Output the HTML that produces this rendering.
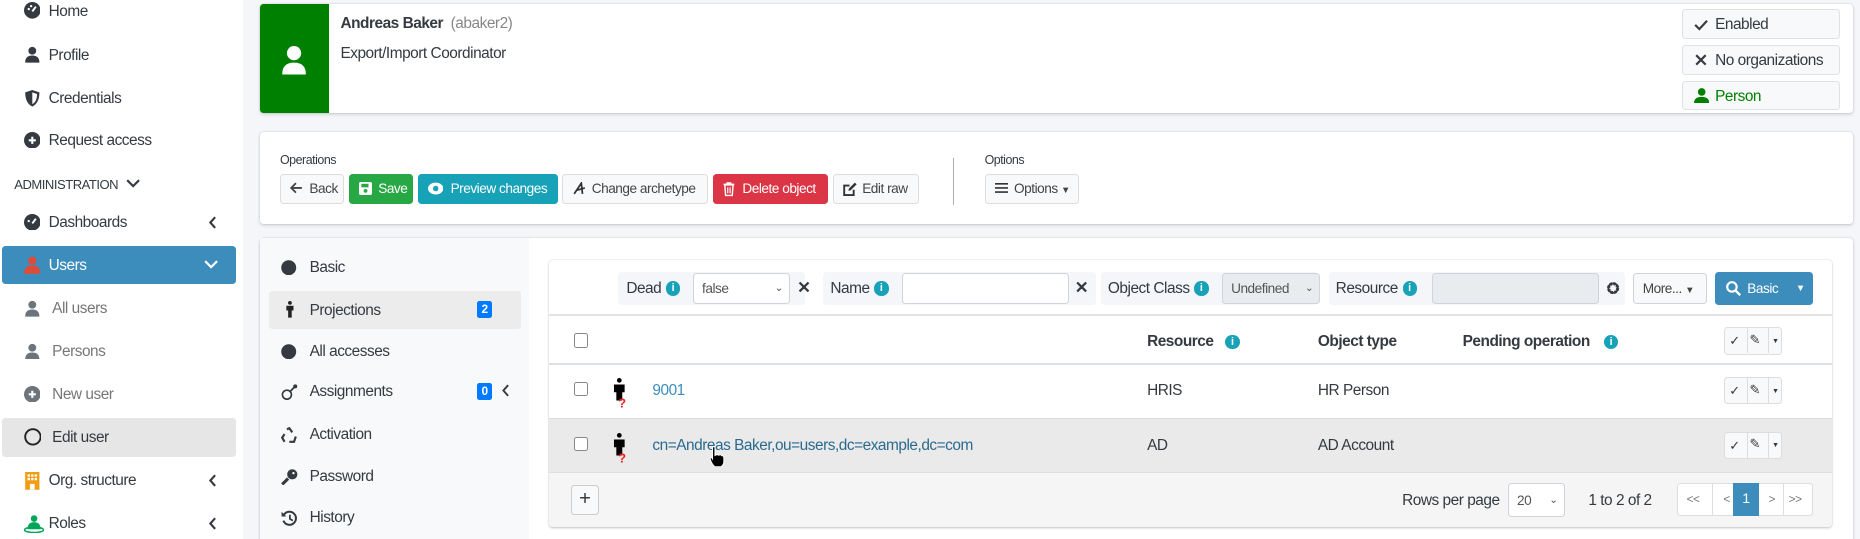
<!DOCTYPE html>
<html><head><meta charset="utf-8">
<style>
*{box-sizing:border-box;margin:0;padding:0}
html,body{width:1860px;height:539px;overflow:hidden;background:#f4f6f9}
#w{zoom:1.18622;width:1568px;height:455px;position:relative;font-family:"Liberation Sans",sans-serif;font-size:12.5px;color:#343a40;letter-spacing:-0.4px}
.a{position:absolute}
.side{left:0;top:0;width:205px;height:455px;background:#fff}
.si{position:absolute;left:2px;width:197px;height:32px;line-height:33px;padding-left:39px;font-size:13px;color:#343a40}
.si svg{position:absolute;left:18px;top:9px}
.card{background:#fff;border-radius:3px;box-shadow:0 0 1px rgba(0,0,0,.2),0 1px 3px rgba(0,0,0,.15)}
.btn{position:absolute;top:147px;height:25px;line-height:24px;border:1px solid #ddd;border-radius:3px;background:#f8f9fa;font-size:11.5px;padding-left:24px;color:#444}
.btn svg{position:absolute;left:8px;top:6px}
.badge{position:absolute;left:1418px;width:133px;height:25px;line-height:25px;border:1px solid #dee2e6;border-radius:3px;background:#f8f9fa;padding-left:27px;font-size:13px}
.mi{position:absolute;left:227px;width:212px;height:32px;line-height:33px;padding-left:34px;font-size:13px}
.mi svg{position:absolute;left:10px;top:10px}
.chip{position:absolute;top:229px;height:28px;background:#f4f6f9;border-radius:3px;line-height:29px;font-size:13px}
.info{display:inline-block;width:12px;height:12px;border-radius:50%;background:#17a2b8;color:#fff;font-size:9px;line-height:12px;text-align:center;font-weight:bold;vertical-align:1px;margin-left:4px;letter-spacing:0}
.inp{position:absolute;top:230px;height:26px;border:1px solid #ced4da;border-radius:3px;background:#fff;font-size:11.5px;line-height:25px;padding-left:7px;color:#555}
.cb{position:absolute;left:484px;width:12px;height:12px;border:1px solid #888;border-radius:2px;background:#fff}
.act{position:absolute;left:1453px;width:49px;height:23px;border:1px solid #ddd;border-radius:3px;background:#f8f9fa}
.act i{position:absolute;top:0;height:21px;border-right:1px solid #ddd}
.th{position:absolute;top:281px;font-weight:bold;font-size:13px}
.td{position:absolute;font-size:13px}
</style></head><body><div id="w">
<div class="a side">
 <div class="si" style="top:-7px"><svg width="14" height="14" viewBox="0 0 14 14"><circle cx="7" cy="7" r="7" fill="#343a40"/><path d="M7 8 L10 4" stroke="#fff" stroke-width="1.6"/><circle cx="4" cy="6" r="1" fill="#fff"/><circle cx="6" cy="3.5" r="1" fill="#fff"/></svg>Home</div>
 <div class="si" style="top:30px"><svg width="14" height="14" viewBox="0 0 14 14"><circle cx="7" cy="4" r="3.3" fill="#343a40"/><path d="M1 14 Q1 8 7 8 Q13 8 13 14Z" fill="#343a40"/></svg>Profile</div>
 <div class="si" style="top:67px"><svg width="14" height="14" viewBox="0 0 14 14"><path d="M7 0 L13 2 Q13 11 7 14 Q1 11 1 2Z" fill="#343a40"/><path d="M7 2 L11 3.4 Q11 10 7 12Z" fill="#fff"/></svg>Credentials</div>
 <div class="si" style="top:102px"><svg width="14" height="14" viewBox="0 0 14 14"><circle cx="7" cy="7" r="7" fill="#343a40"/><path d="M7 4V10M4 7H10" stroke="#fff" stroke-width="1.8"/></svg>Request access</div>
 <div class="a" style="left:12px;top:149px;font-size:11px">ADMINISTRATION <svg width="12" height="8" viewBox="0 0 12 8" style="margin-left:4px"><path d="M1 1L6 6L11 1" stroke="#343a40" stroke-width="1.8" fill="none"/></svg></div>
 <div class="si" style="top:171px"><svg width="14" height="14" viewBox="0 0 14 14"><circle cx="7" cy="7" r="7" fill="#343a40"/><path d="M7 8 L10 4" stroke="#fff" stroke-width="1.6"/><circle cx="4" cy="6" r="1" fill="#fff"/></svg>Dashboards<svg style="left:173px;top:11px" width="8" height="11" viewBox="0 0 8 11"><path d="M6 1L2 5.5L6 10" stroke="#343a40" stroke-width="1.8" fill="none"/></svg></div>
 <div class="si" style="top:207px;background:#3c8dbc;color:#fff;border-radius:3px"><svg width="14" height="15" viewBox="0 0 14 15"><circle cx="7" cy="4" r="3.5" fill="#dd4b39"/><path d="M0 15 Q0 8 7 8 Q14 8 14 15Z" fill="#dd4b39"/></svg>Users<svg style="left:170px;top:12px" width="12" height="8" viewBox="0 0 12 8"><path d="M1 1L6 6L11 1" stroke="#fff" stroke-width="1.8" fill="none"/></svg></div>
 <div class="si" style="top:244px;color:#777;padding-left:42px"><svg width="14" height="14" viewBox="0 0 14 14"><circle cx="7" cy="4" r="3.3" fill="#6c757d"/><path d="M1 14 Q1 8 7 8 Q13 8 13 14Z" fill="#6c757d"/></svg>All users</div>
 <div class="si" style="top:280px;color:#777;padding-left:42px"><svg width="14" height="14" viewBox="0 0 14 14"><circle cx="7" cy="4" r="3.3" fill="#6c757d"/><path d="M1 14 Q1 8 7 8 Q13 8 13 14Z" fill="#6c757d"/></svg>Persons</div>
 <div class="si" style="top:316px;color:#777;padding-left:42px"><svg width="14" height="14" viewBox="0 0 14 14"><circle cx="7" cy="7" r="7" fill="#6c757d"/><path d="M7 4V10M4 7H10" stroke="#fff" stroke-width="1.8"/></svg>New user</div>
 <div class="si" style="top:352px;height:33px;line-height:34px;background:#e6e6e6;border-radius:3px;padding-left:42px"><svg width="15" height="15" viewBox="0 0 15 15"><circle cx="7.5" cy="7.5" r="6.5" stroke="#222" stroke-width="1.6" fill="none"/></svg>Edit user</div>
 <div class="si" style="top:389px"><svg width="14" height="15" viewBox="0 0 14 15"><rect x="1" y="0" width="12" height="15" fill="#f39c12"/><g fill="#fff"><rect x="3" y="2" width="2" height="2"/><rect x="6" y="2" width="2" height="2"/><rect x="9" y="2" width="2" height="2"/><rect x="3" y="5" width="2" height="2"/><rect x="6" y="5" width="2" height="2"/><rect x="9" y="5" width="2" height="2"/><rect x="5" y="10" width="4" height="5"/></g></svg>Org. structure<svg style="left:173px;top:11px" width="8" height="11" viewBox="0 0 8 11"><path d="M6 1L2 5.5L6 10" stroke="#343a40" stroke-width="1.8" fill="none"/></svg></div>
 <div class="si" style="top:425px"><svg width="17" height="15" viewBox="0 0 17 15"><circle cx="8.5" cy="3" r="2.8" fill="#00a65a"/><path d="M3 12 Q3 6 8.5 6 Q14 6 14 12Z" fill="#00a65a"/><ellipse cx="8.5" cy="12.5" rx="8" ry="2.3" fill="none" stroke="#00a65a" stroke-width="1.3"/></svg>Roles<svg style="left:173px;top:11px" width="8" height="11" viewBox="0 0 8 11"><path d="M6 1L2 5.5L6 10" stroke="#343a40" stroke-width="1.8" fill="none"/></svg></div>
</div>

<div class="a card" style="left:219px;top:3px;width:1343px;height:92px"></div>
<div class="a" style="left:219px;top:3px;width:58px;height:92px;background:#008000;border-radius:3px 0 0 3px"></div>
<svg class="a" style="left:237px;top:39px" width="22" height="24" viewBox="0 0 22 24"><circle cx="11" cy="6" r="6" fill="#fff"/><path d="M1 24 Q1 14 11 14 Q21 14 21 24Z" fill="#fff"/></svg>
<div class="a" style="left:287px;top:13px;font-size:13px"><b>Andreas Baker</b>&nbsp;&nbsp;<span style="color:#888">(abaker2)</span></div>
<div class="a" style="left:287px;top:38px;font-size:13px">Export/Import Coordinator</div>
<div class="badge" style="top:8px"><svg class="a" style="left:9px;top:7px" width="12" height="10" viewBox="0 0 12 10"><path d="M1 5L4.5 8.5L11 1.5" stroke="#343a40" stroke-width="1.8" fill="none"/></svg>Enabled</div>
<div class="badge" style="top:38px"><svg class="a" style="left:10px;top:7px" width="10" height="10" viewBox="0 0 10 10"><path d="M1 1L9 9M9 1L1 9" stroke="#343a40" stroke-width="1.8"/></svg>No organizations</div>
<div class="badge" style="top:68px;color:#008000"><svg class="a" style="left:9px;top:5px" width="13" height="13" viewBox="0 0 13 13"><circle cx="6.5" cy="3.3" r="3.2" fill="#008000"/><path d="M0 13 Q0 7.5 6.5 7.5 Q13 7.5 13 13Z" fill="#008000"/></svg>Person</div>

<div class="a card" style="left:219px;top:111px;width:1343px;height:78px"></div>
<div class="a" style="left:236px;top:129px;font-size:10.5px">Operations</div>
<div class="btn" style="left:236px;width:54px"><svg width="11" height="10" viewBox="0 0 11 10"><path d="M5 1L1 5L5 9M1 5H10" stroke="#444" stroke-width="1.5" fill="none"/></svg>Back</div>
<div class="btn" style="left:294px;width:54px;background:#28a745;border-color:#28a745;color:#fff"><svg width="11" height="11" viewBox="0 0 11 11"><rect x="0" y="0" width="11" height="11" rx="1.5" fill="#fff"/><rect x="2" y="1.5" width="6" height="3" fill="#28a745"/><circle cx="5.5" cy="7.5" r="1.6" fill="#28a745"/></svg>Save</div>
<div class="btn" style="left:352px;width:118px;background:#17a2b8;border-color:#17a2b8;color:#fff;padding-left:27px"><svg width="13" height="11" viewBox="0 0 13 11"><ellipse cx="6.5" cy="5.5" rx="6.5" ry="5" fill="#fff"/><circle cx="6.5" cy="5.5" r="2.3" fill="#17a2b8"/></svg>Preview changes</div>
<div class="btn" style="left:474px;width:123px"><svg width="11" height="11" viewBox="0 0 11 11"><path d="M1 10L7 1L8 10M3 7L10 5" stroke="#333" stroke-width="1.5" fill="none"/></svg>Change archetype</div>
<div class="btn" style="left:601px;width:97px;background:#dc3545;border-color:#dc3545;color:#fff"><svg width="10" height="12" viewBox="0 0 10 12"><path d="M0.5 2H9.5M3.5 2V0.8H6.5V2M1.5 2.5L2.2 11.3H7.8L8.5 2.5Z" stroke="#fff" stroke-width="1.2" fill="none"/><path d="M4 4.5V9.5M6 4.5V9.5" stroke="#fff" stroke-width="1"/></svg>Delete object</div>
<div class="btn" style="left:702px;width:73px"><svg width="12" height="12" viewBox="0 0 12 12"><path d="M9 6.5V11H1V3H5.5" stroke="#333" stroke-width="1.6" fill="none"/><path d="M4.5 7.5L5 5.5L10 0.5L11.5 2L6.5 7Z" fill="#333"/></svg>Edit raw</div>
<div class="a" style="left:803px;top:133px;width:1px;height:40px;background:#aab"></div>
<div class="a" style="left:830px;top:129px;font-size:10.5px">Options</div>
<div class="btn" style="left:830px;width:80px"><svg width="11" height="10" viewBox="0 0 11 10"><path d="M0 1.5H11M0 5H11M0 8.5H11" stroke="#333" stroke-width="1.4"/></svg>Options <span style="font-size:8px">&#9660;</span></div>

<div class="a card" style="left:219px;top:201px;width:1343px;height:260px"></div>
<div class="a" style="left:219px;top:201px;width:227px;height:260px;background:#f8f9fa"></div>
<div class="mi" style="top:209px"><svg width="13" height="13"><circle cx="6.5" cy="6.5" r="6.3" fill="#343a40"/></svg>Basic</div>
<div class="mi" style="top:245px;background:#ececec;border-radius:3px"><svg width="10" height="14" viewBox="0 0 10 14" style="left:12px;top:9px"><circle cx="5" cy="1.6" r="1.6" fill="#222"/><path d="M2 4H8V8H6.5V14H3.5V8H2Z" fill="#222"/></svg>Projections<span class="a" style="left:175px;top:9px;width:13px;height:14px;background:#007bff;color:#fff;border-radius:2px;font-size:10px;line-height:14px;text-align:center;font-weight:bold">2</span></div>
<div class="mi" style="top:280px"><svg width="13" height="13"><circle cx="6.5" cy="6.5" r="6.3" fill="#343a40"/></svg>All accesses</div>
<div class="mi" style="top:314px"><svg width="14" height="14" viewBox="0 0 14 14"><circle cx="5" cy="9" r="3.8" stroke="#343a40" stroke-width="1.4" fill="none"/><path d="M7.5 6.5L11 3" stroke="#343a40" stroke-width="1.5"/><circle cx="12" cy="2" r="1.7" fill="#343a40"/></svg>Assignments<span class="a" style="left:175px;top:9px;width:13px;height:14px;background:#007bff;color:#fff;border-radius:2px;font-size:10px;line-height:14px;text-align:center;font-weight:bold">0</span><svg width="7" height="11" viewBox="0 0 7 11" style="left:195px;top:10px"><path d="M6 1L2 5.5L6 10" stroke="#343a40" stroke-width="1.6" fill="none"/></svg></div>
<div class="mi" style="top:350px"><svg width="14" height="14" viewBox="0 0 14 14"><path d="M5 2L7 1L9.5 4.5M12.5 8L11 12.5H7M3 12.5L1 9L3 6" stroke="#343a40" stroke-width="1.8" fill="none"/></svg>Activation</div>
<div class="mi" style="top:385px"><svg width="14" height="14" viewBox="0 0 14 14"><circle cx="9.5" cy="4.5" r="4.3" fill="#343a40"/><path d="M6 8L1 13" stroke="#343a40" stroke-width="2.6"/><circle cx="10.5" cy="3.5" r="1" fill="#fff"/></svg>Password</div>
<div class="mi" style="top:420px"><svg width="14" height="14" viewBox="0 0 14 14"><path d="M2.5 4A5.5 5.5 0 1 1 2 9" stroke="#343a40" stroke-width="1.7" fill="none"/><path d="M0.5 1.5V5.5H4.5Z" fill="#343a40"/><path d="M7.5 4V7.5L10 9" stroke="#343a40" stroke-width="1.5" fill="none"/></svg>History</div>

<div class="a" style="left:463px;top:219px;width:1081px;height:225px;background:#fff;border-radius:3px;box-shadow:0 0 1px rgba(0,0,0,.25),0 1px 2px rgba(0,0,0,.15)"></div>
<div class="chip" style="left:521px;width:158px;padding-left:7px">Dead<span class="info">i</span></div>
<div class="inp" style="left:584px;width:82px">false<span class="a" style="right:5px;top:0;font-size:9px">&#8964;</span></div>
<div class="a" style="left:672px;top:234px;font-size:14px;font-weight:bold">&#x2715;</div>
<div class="chip" style="left:694px;width:230px;padding-left:6px">Name<span class="info">i</span></div>
<div class="inp" style="left:760px;width:141px"></div>
<div class="a" style="left:906px;top:234px;font-size:14px;font-weight:bold">&#x2715;</div>
<div class="chip" style="left:928px;width:183px;padding-left:6px">Object Class<span class="info">i</span></div>
<div class="inp" style="left:1030px;width:83px;background:#e9ecef">Undefined<span class="a" style="right:5px;top:0;font-size:9px">&#8964;</span></div>
<div class="chip" style="left:1120px;width:250px;padding-left:6px">Resource<span class="info">i</span></div>
<div class="inp" style="left:1207px;width:141px;background:#e9ecef"></div>
<svg class="a" style="left:1354px;top:237px" width="12" height="12" viewBox="0 0 12 12"><circle cx="6" cy="6" r="3.8" stroke="#343a40" stroke-width="2.6" fill="none" stroke-dasharray="2 1"/><circle cx="6" cy="6" r="4" stroke="#343a40" stroke-width="1.5" fill="none"/></svg>
<div class="inp" style="left:1377px;width:62px;background:#f8f9fa;color:#444">More... <span style="font-size:8px">&#9660;</span></div>
<div class="a" style="left:1446px;top:229px;width:82px;height:28px;background:#3c8dbc;border-radius:3px;color:#fff;font-size:11.5px;line-height:29px;padding-left:27px">Basic<svg class="a" style="left:9px;top:8px" width="13" height="13" viewBox="0 0 13 13"><circle cx="5" cy="5" r="4" stroke="#fff" stroke-width="1.8" fill="none"/><path d="M8 8L12 12" stroke="#fff" stroke-width="2"/></svg><span class="a" style="left:68px;top:0;font-size:8px">&#9660;</span></div>
<div class="a" style="left:463px;top:265px;width:1081px;height:1px;background:#e3e3e3"></div>
<div class="cb" style="top:281px"></div>
<div class="th" style="left:967px">Resource<span class="info" style="margin-left:10px">i</span></div>
<div class="th" style="left:1111px">Object type</div>
<div class="th" style="left:1233px">Pending operation<span class="info" style="margin-left:12px">i</span></div>
<div class="act" style="top:276px"><i style="left:19px"></i><i style="left:37px"></i><span class="a" style="left:4px;top:4px;font-size:11px">&#10003;</span><span class="a" style="left:21px;top:3px;font-size:11px">&#9998;</span><span class="a" style="left:40px;top:7px;font-size:6px">&#9660;</span></div>
<div class="a" style="left:463px;top:306px;width:1081px;height:2px;background:#dee2e6"></div>
<div class="cb" style="top:322px"></div>
<svg class="a" style="left:515px;top:319px" width="16" height="26" viewBox="0 0 16 26"><circle cx="7" cy="2" r="2" fill="#000"/><path d="M2.5 5.5H11.5V12H9.5V19H4.5V12H2.5Z" fill="#000"/><text x="6" y="25" font-size="11" font-weight="bold" fill="#e22" font-family="Liberation Sans">?</text></svg>
<div class="td" style="left:550px;top:322px;color:#3c8dbc">9001</div>
<div class="td" style="left:967px;top:322px">HRIS</div>
<div class="td" style="left:1111px;top:322px">HR Person</div>
<div class="act" style="top:318px"><i style="left:19px"></i><i style="left:37px"></i><span class="a" style="left:4px;top:4px;font-size:11px">&#10003;</span><span class="a" style="left:21px;top:3px;font-size:11px">&#9998;</span><span class="a" style="left:40px;top:7px;font-size:6px">&#9660;</span></div>
<div class="a" style="left:463px;top:352px;width:1081px;height:46px;background:#eaeaea;border-top:1px solid #dedede"></div>
<div class="cb" style="top:368px"></div>
<svg class="a" style="left:515px;top:365px" width="16" height="26" viewBox="0 0 16 26"><circle cx="7" cy="2" r="2" fill="#000"/><path d="M2.5 5.5H11.5V12H9.5V19H4.5V12H2.5Z" fill="#000"/><text x="6" y="25" font-size="11" font-weight="bold" fill="#e22" font-family="Liberation Sans">?</text></svg>
<div class="td" style="left:550px;top:368px;color:#2a6a8f">cn=Andreas Baker,ou=users,dc=example,dc=com</div>
<svg class="a" style="left:598px;top:376px" width="14" height="18" viewBox="0 0 14 18"><path d="M3 1.5Q3 0.5 4 0.5Q5 0.5 5 1.5V8L6 7.5Q7 7 8 7.8L9 7.5Q10 7.2 10.7 8.2Q12 8 12.5 9.5V13Q12.5 16 10 17.5H5Q3 16 1.5 12.5L1 10.5Q1 9.5 2 9.5L3 11Z" fill="#000" stroke="#fff" stroke-width="0.8"/></svg>
<div class="td" style="left:967px;top:368px">AD</div>
<div class="td" style="left:1111px;top:368px">AD Account</div>
<div class="act" style="top:364px"><i style="left:19px"></i><i style="left:37px"></i><span class="a" style="left:4px;top:4px;font-size:11px">&#10003;</span><span class="a" style="left:21px;top:3px;font-size:11px">&#9998;</span><span class="a" style="left:40px;top:7px;font-size:6px">&#9660;</span></div>
<div class="a" style="left:463px;top:398px;width:1081px;height:46px;background:#f5f5f5;border-top:1px solid #e0e0e0;border-radius:0 0 3px 3px"></div>
<div class="a" style="left:481px;top:409px;width:24px;height:25px;border:1px solid #ccc;border-radius:3px;background:#f8f9fa;text-align:center;line-height:22px;font-size:17px">+</div>
<div class="td" style="left:1182px;top:415px">Rows per page</div>
<div class="inp" style="left:1271px;top:407px;height:29px;width:48px;line-height:28px">20<span class="a" style="right:5px;top:0;font-size:9px">&#8964;</span></div>
<div class="td" style="left:1339px;top:415px">1 to 2 of 2</div>
<div class="a" style="left:1414px;top:407px;width:114px;height:28px;border:1px solid #ddd;border-radius:3px;background:#fff;font-size:10px;color:#777;line-height:26px">
 <span class="a" style="left:7px">&lt;&lt;</span><span class="a" style="left:28px;top:0;width:1px;height:26px;background:#ddd"></span><span class="a" style="left:38px">&lt;</span>
 <span class="a" style="left:46px;top:-1px;width:22px;height:28px;background:#3c8dbc;color:#fff;text-align:center;line-height:28px;font-size:12px">1</span>
 <span class="a" style="left:76px">&gt;</span><span class="a" style="left:88px;top:0;width:1px;height:26px;background:#ddd"></span><span class="a" style="left:93px">&gt;&gt;</span>
</div>
</div></body></html>
